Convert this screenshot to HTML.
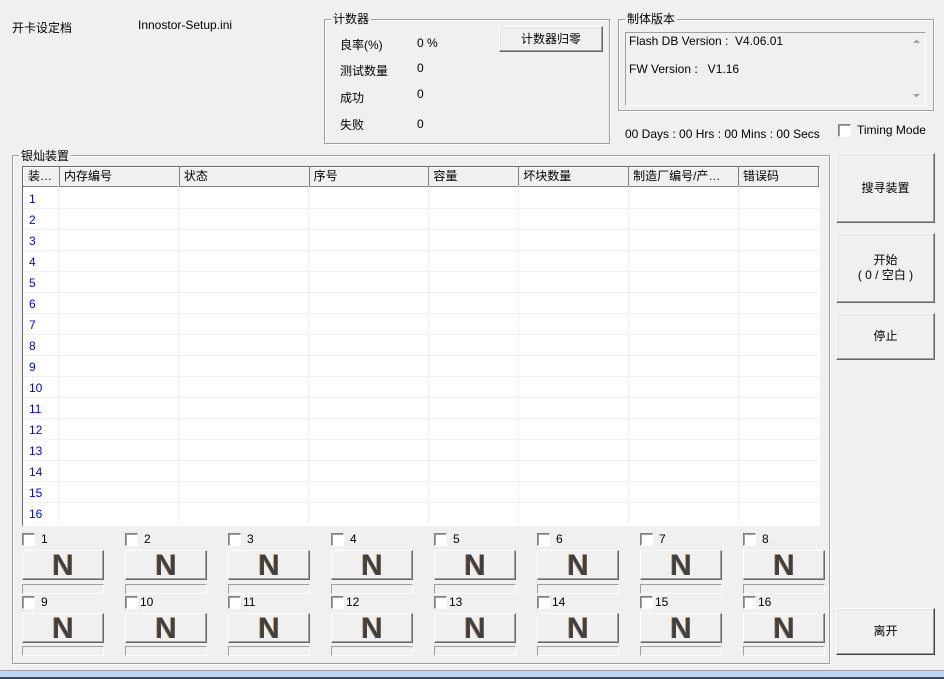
<!DOCTYPE html>
<html><head><meta charset="utf-8"><style>
*{box-sizing:border-box;margin:0;padding:0}
body{width:944px;height:679px;background:#f0f0f0;font:12px "Liberation Sans","Noto Sans CJK SC",sans-serif;color:#000;position:relative;overflow:hidden}
.a{position:absolute;white-space:nowrap}
.grp{position:absolute;border:1px solid #a0a0a0;box-shadow:inset 1px 1px 0 #fff,1px 1px 0 #fff}
.lg{position:absolute;background:#f0f0f0;padding:0 2px;line-height:14px}
.btn{position:absolute;background:#f0f0f0;border:1px solid;border-color:#fff #696969 #696969 #fff;box-shadow:inset -1px -1px 0 #a0a0a0,inset 1px 1px 0 #e3e3e3;display:flex;align-items:center;justify-content:center;text-align:center;line-height:15px}
.cb{position:absolute;width:13px;height:13px;background:#fff;border:1px solid;border-color:#808080 #fff #fff #808080;box-shadow:inset 1px 1px 0 #a0a0a0}
.n{position:absolute;width:82px;height:30px;background:#f0f0f0;border:1px solid;border-color:#fff #696969 #696969 #fff;box-shadow:inset -1px -1px 0 #a0a0a0;font:bold 30px "Liberation Sans",sans-serif;color:#404040;text-align:center;line-height:30px;text-shadow:-1px 0 0 rgba(192,128,64,.6)}
.pb{position:absolute;width:82px;height:10px;border:1px solid;border-color:#a0a0a0 #fff #fff #a0a0a0;background:#f0f0f0}
.sl{position:absolute}
table{border-collapse:collapse}
</style></head><body>
<div class="a" style="left:12px;top:19px">开卡设定档</div>
<div class="a" style="left:138px;top:18px">Innostor-Setup.ini</div>

<div class="grp" style="left:324px;top:19px;width:286px;height:125px"></div>
<div class="lg" style="left:331px;top:12px">计数器</div>
<div class="a" style="left:340px;top:36px">良率(%)</div><div class="a" style="left:417px;top:36px">0 %</div>
<div class="a" style="left:340px;top:62px">测试数量</div><div class="a" style="left:417px;top:61px">0</div>
<div class="a" style="left:340px;top:89px">成功</div><div class="a" style="left:417px;top:87px">0</div>
<div class="a" style="left:340px;top:116px">失败</div><div class="a" style="left:417px;top:117px">0</div>
<div class="btn" style="left:499px;top:26px;width:104px;height:26px">计数器归零</div>

<div class="grp" style="left:618px;top:19px;width:316px;height:92px"></div>
<div class="lg" style="left:625px;top:12px">制体版本</div>
<div class="a" style="left:625px;top:32px;width:301px;height:74px;border:1px solid;border-color:#a0a0a0 #fff #fff #a0a0a0;background:#f0f0f0"></div>
<div class="a" style="left:629px;top:34px">Flash DB Version :&nbsp; V4.06.01</div>
<div class="a" style="left:629px;top:62px">FW Version :&nbsp;&nbsp; V1.16</div>
<svg class="a" style="left:912px;top:38px" width="9" height="6"><path d="M1 5L4.5 1.5L8 5Z" fill="#a0a0a0"/></svg>
<svg class="a" style="left:912px;top:93px" width="9" height="6"><path d="M1 1L4.5 4.5L8 1Z" fill="#a0a0a0"/></svg>
<div class="a" style="left:625px;top:127px">00 Days : 00 Hrs : 00 Mins : 00 Secs</div>
<div class="cb" style="left:838px;top:124px"></div>
<div class="a" style="left:857px;top:123px">Timing Mode</div>

<div class="grp" style="left:12px;top:155px;width:818px;height:509px"></div>
<div class="lg" style="left:19px;top:149px">银灿装置</div>

<div class="a" style="left:22px;top:166px;width:798px;height:360px;background:#fff;border:1px solid;border-color:#696969 #fff #fff #696969">
<table style="position:absolute;left:0;top:0">
<tr style="height:19px;background:#f0f0f0">
<td style="width:36px;border:1px solid;border-color:#fff #808080 #808080 #fff;padding-left:4px;vertical-align:top;line-height:17px">装…</td>
<td style="width:120px;border:1px solid;border-color:#fff #808080 #808080 #fff;padding-left:4px;vertical-align:top;line-height:17px">内存编号</td>
<td style="width:130px;border:1px solid;border-color:#fff #808080 #808080 #fff;padding-left:4px;vertical-align:top;line-height:17px">状态</td>
<td style="width:120px;border:1px solid;border-color:#fff #808080 #808080 #fff;padding-left:4px;vertical-align:top;line-height:17px">序号</td>
<td style="width:90px;border:1px solid;border-color:#fff #808080 #808080 #fff;padding-left:4px;vertical-align:top;line-height:17px">容量</td>
<td style="width:110px;border:1px solid;border-color:#fff #808080 #808080 #fff;padding-left:4px;vertical-align:top;line-height:17px">坏块数量</td>
<td style="width:110px;border:1px solid;border-color:#fff #808080 #808080 #fff;padding-left:4px;vertical-align:top;line-height:17px">制造厂编号/产…</td>
<td style="width:80px;border:1px solid;border-color:#fff #808080 #808080 #fff;padding-left:4px;vertical-align:top;line-height:17px">错误码</td>
</tr>
</table>
<div style="position:absolute;left:0;top:21px;width:796px">
<style>.r{height:21px;border-bottom:1px solid #f0f0f0;position:relative;color:#0000ff;padding:4px 0 0 6px;line-height:14px}</style>
<div class="r">1</div><div class="r">2</div><div class="r">3</div><div class="r">4</div><div class="r">5</div><div class="r">6</div><div class="r">7</div><div class="r">8</div><div class="r">9</div><div class="r">10</div><div class="r">11</div><div class="r">12</div><div class="r">13</div><div class="r">14</div><div class="r">15</div><div class="r" style="border:0">16</div>
</div>
<div style="position:absolute;top:19px;bottom:0;left:35px;border-left:1px solid #f0f0f0"></div>
<div style="position:absolute;top:19px;bottom:0;left:155px;border-left:1px solid #f0f0f0"></div>
<div style="position:absolute;top:19px;bottom:0;left:285px;border-left:1px solid #f0f0f0"></div>
<div style="position:absolute;top:19px;bottom:0;left:405px;border-left:1px solid #f0f0f0"></div>
<div style="position:absolute;top:19px;bottom:0;left:495px;border-left:1px solid #f0f0f0"></div>
<div style="position:absolute;top:19px;bottom:0;left:605px;border-left:1px solid #f0f0f0"></div>
<div style="position:absolute;top:19px;bottom:0;left:715px;border-left:1px solid #f0f0f0"></div>
</div>

<div class="sl" style="left:22px;top:533px"><div class="cb" style="left:0;top:0"></div><div class="a" style="left:19px;top:-1px">1</div><div class="n" style="left:0;top:17px">N</div><div class="pb" style="left:0;top:51px"></div></div>
<div class="sl" style="left:125px;top:533px"><div class="cb" style="left:0;top:0"></div><div class="a" style="left:19px;top:-1px">2</div><div class="n" style="left:0;top:17px">N</div><div class="pb" style="left:0;top:51px"></div></div>
<div class="sl" style="left:228px;top:533px"><div class="cb" style="left:0;top:0"></div><div class="a" style="left:19px;top:-1px">3</div><div class="n" style="left:0;top:17px">N</div><div class="pb" style="left:0;top:51px"></div></div>
<div class="sl" style="left:331px;top:533px"><div class="cb" style="left:0;top:0"></div><div class="a" style="left:19px;top:-1px">4</div><div class="n" style="left:0;top:17px">N</div><div class="pb" style="left:0;top:51px"></div></div>
<div class="sl" style="left:434px;top:533px"><div class="cb" style="left:0;top:0"></div><div class="a" style="left:19px;top:-1px">5</div><div class="n" style="left:0;top:17px">N</div><div class="pb" style="left:0;top:51px"></div></div>
<div class="sl" style="left:537px;top:533px"><div class="cb" style="left:0;top:0"></div><div class="a" style="left:19px;top:-1px">6</div><div class="n" style="left:0;top:17px">N</div><div class="pb" style="left:0;top:51px"></div></div>
<div class="sl" style="left:640px;top:533px"><div class="cb" style="left:0;top:0"></div><div class="a" style="left:19px;top:-1px">7</div><div class="n" style="left:0;top:17px">N</div><div class="pb" style="left:0;top:51px"></div></div>
<div class="sl" style="left:743px;top:533px"><div class="cb" style="left:0;top:0"></div><div class="a" style="left:19px;top:-1px">8</div><div class="n" style="left:0;top:17px">N</div><div class="pb" style="left:0;top:51px"></div></div>
<div class="sl" style="left:22px;top:596px"><div class="cb" style="left:0;top:0"></div><div class="a" style="left:19px;top:-1px">9</div><div class="n" style="left:0;top:17px">N</div><div class="pb" style="left:0;top:50px"></div></div>
<div class="sl" style="left:125px;top:596px"><div class="cb" style="left:0;top:0"></div><div class="a" style="left:15px;top:-1px">10</div><div class="n" style="left:0;top:17px">N</div><div class="pb" style="left:0;top:50px"></div></div>
<div class="sl" style="left:228px;top:596px"><div class="cb" style="left:0;top:0"></div><div class="a" style="left:15px;top:-1px">11</div><div class="n" style="left:0;top:17px">N</div><div class="pb" style="left:0;top:50px"></div></div>
<div class="sl" style="left:331px;top:596px"><div class="cb" style="left:0;top:0"></div><div class="a" style="left:15px;top:-1px">12</div><div class="n" style="left:0;top:17px">N</div><div class="pb" style="left:0;top:50px"></div></div>
<div class="sl" style="left:434px;top:596px"><div class="cb" style="left:0;top:0"></div><div class="a" style="left:15px;top:-1px">13</div><div class="n" style="left:0;top:17px">N</div><div class="pb" style="left:0;top:50px"></div></div>
<div class="sl" style="left:537px;top:596px"><div class="cb" style="left:0;top:0"></div><div class="a" style="left:15px;top:-1px">14</div><div class="n" style="left:0;top:17px">N</div><div class="pb" style="left:0;top:50px"></div></div>
<div class="sl" style="left:640px;top:596px"><div class="cb" style="left:0;top:0"></div><div class="a" style="left:15px;top:-1px">15</div><div class="n" style="left:0;top:17px">N</div><div class="pb" style="left:0;top:50px"></div></div>
<div class="sl" style="left:743px;top:596px"><div class="cb" style="left:0;top:0"></div><div class="a" style="left:15px;top:-1px">16</div><div class="n" style="left:0;top:17px">N</div><div class="pb" style="left:0;top:50px"></div></div>

<div class="btn" style="left:836px;top:153px;width:99px;height:70px">搜寻装置</div>
<div class="btn" style="left:836px;top:233px;width:99px;height:70px">开始<br>( 0 / 空白 )</div>
<div class="btn" style="left:836px;top:313px;width:99px;height:47px">停止</div>
<div class="btn" style="left:836px;top:608px;width:99px;height:47px;border-color:#fff #404040 #404040 #fff">离开</div>

<div class="a" style="left:0;top:670px;width:944px;height:1px;background:#a0a0a0"></div>
<div class="a" style="left:0;top:671px;width:944px;height:6px;background:#b9d9f5"></div>
<div class="a" style="left:0;top:677px;width:944px;height:2px;background:#404850"></div>
</body></html>
